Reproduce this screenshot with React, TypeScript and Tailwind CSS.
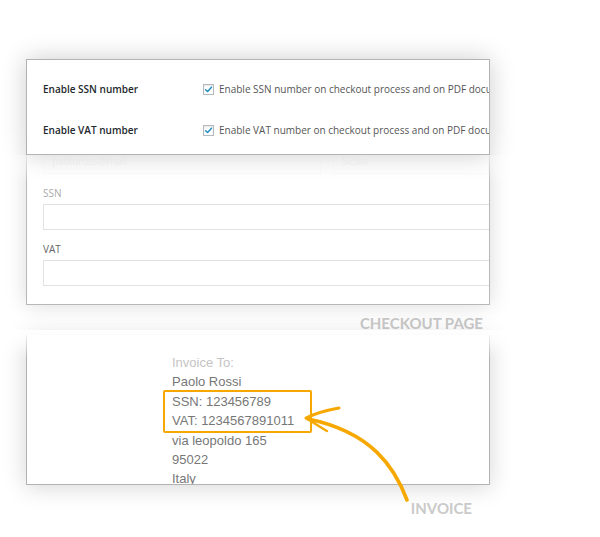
import React from "react";

function Check() {
  return (
    <span className="flex h-[11px] w-[11px] shrink-0 items-center justify-center border border-[#b4b9be] bg-white shadow-[inset_0_1px_2px_rgba(0,0,0,0.1)]">
      <svg width="9" height="9" viewBox="0 0 10 10">
        <path d="M1.8 5.2 L4 7.3 L8.3 2.4" fill="none" stroke="#1e8cbe" strokeWidth="1.6" strokeLinecap="round" strokeLinejoin="round" />
      </svg>
    </span>
  );
}

export default function App() {
  const sans = { fontFamily: '"Open Sans", "Noto Sans", sans-serif' };
  const arial = { fontFamily: '"Liberation Sans", Arial, sans-serif' };
  const lato = { fontFamily: 'Lato, "Open Sans", sans-serif' };
  return (
    <div className="relative h-[537px] w-[600px] overflow-hidden bg-white">
      <div className="flex w-[490px] flex-col pl-[26px] pt-[59px]">
        {/* Settings card */}
        <div
          className="relative z-20 flex flex-col gap-[25px] overflow-hidden whitespace-nowrap border border-[#b3b3b3] bg-white pb-[16px] pl-[16px] pt-[21px] shadow-[0_0_24px_rgba(0,0,0,0.2)]"
          style={sans}
        >
          <div className="flex h-[16px] items-center">
            <span className="w-[160px] shrink-0 text-[10px] font-semibold text-[#23282d]">Enable SSN number</span>
            <Check />
            <span className="ml-[5px] text-[10px] text-[#555]">Enable SSN number on checkout process and on PDF documents</span>
          </div>
          <div className="flex h-[16px] items-center">
            <span className="w-[160px] shrink-0 text-[10px] font-semibold text-[#23282d]">Enable VAT number</span>
            <Check />
            <span className="ml-[5px] text-[10px] text-[#555]">Enable VAT number on checkout process and on PDF documents</span>
          </div>
        </div>

        {/* Checkout card */}
        <div
          className="relative z-10 flex flex-col overflow-hidden border-x border-b border-[#b8b8b8] bg-white pb-[18px] pl-[16px] shadow-[0_0_20px_rgba(0,0,0,0.15)]"
          style={sans}
        >
          <div className="flex h-[19px] gap-[12px] opacity-25">
            <div className="flex w-[278px] items-start border-x border-b border-[#eee] pl-[8px]">
              <span className="text-[10px] leading-[12px] text-[#bbb]">paoloross@mail</span>
            </div>
            <div className="flex flex-1 items-start border-x border-b border-[#eee] pl-[8px]">
              <span className="text-[10px] leading-[12px] text-[#bbb]">Sicilia</span>
            </div>
          </div>
          <span className="mt-[12px] h-[14px] text-[10px] leading-[14px] text-[#aaa]">SSN</span>
          <div className="mt-[4px] h-[26px] border border-r-0 border-[#e2e2e2] bg-white" />
          <span className="mt-[12px] h-[14px] text-[10px] leading-[14px] text-[#666]">VAT</span>
          <div className="mt-[4px] h-[26px] border border-r-0 border-[#e2e2e2] bg-white" />
        </div>

        <div className="mt-[9px] flex h-[18px] justify-end pr-[7px]">
          <span className="text-[15px] font-bold leading-[18px] text-[#cacaca]" style={lato}>CHECKOUT PAGE</span>
        </div>

        {/* Invoice card */}
        <div
          className="mt-[3px] flex h-[150px] flex-col overflow-hidden border-x border-b border-[#b3b3b3] bg-white pl-[145px] pt-[18px] text-[13px] leading-[19.4px] text-[#777] shadow-[0_2px_22px_rgba(0,0,0,0.17)]"
          style={arial}
        >
          <span className="text-[#c4c4c4]">Invoice To:</span>
          <span>Paolo Rossi</span>
          <span>SSN: 123456789</span>
          <span>VAT: 1234567891011</span>
          <span>via leopoldo 165</span>
          <span>95022</span>
          <span>Italy</span>
        </div>

        <div className="mt-[14px] flex h-[18px] justify-end pr-[18px]">
          <span className="text-[15px] font-bold leading-[18px] text-[#cacaca]" style={lato}>INVOICE</span>
        </div>
      </div>

      {/* fade over top of checkout card */}
      <div className="pointer-events-none absolute left-0 top-[155px] z-[15] h-[28px] w-[520px] bg-gradient-to-b from-white/80 to-white/0" />
      {/* fade over top of invoice card */}
      <div className="pointer-events-none absolute left-0 top-[330px] z-[15] h-[28px] w-[520px] bg-gradient-to-b from-white to-white/0" />

      {/* orange highlight box */}
      <div className="absolute left-[163px] top-[390px] z-30 h-[43px] w-[149px] rounded-[2px] border-2 border-[#f7a800]" />

      {/* arrow */}
      <svg className="pointer-events-none absolute left-0 top-0 z-30" width="600" height="537" viewBox="0 0 600 537">
        <path d="M407 500 C 395 468 372 432 308 419" fill="none" stroke="#f7a800" strokeWidth="3.6" strokeLinecap="round" />
        <path d="M306 418 C 318 412 328 410 339 408" fill="none" stroke="#f7a800" strokeWidth="3" strokeLinecap="round" />
        <path d="M306 418 C 314 423 320 427 327 431" fill="none" stroke="#f7a800" strokeWidth="2.4" strokeLinecap="round" />
      </svg>
    </div>
  );
}
